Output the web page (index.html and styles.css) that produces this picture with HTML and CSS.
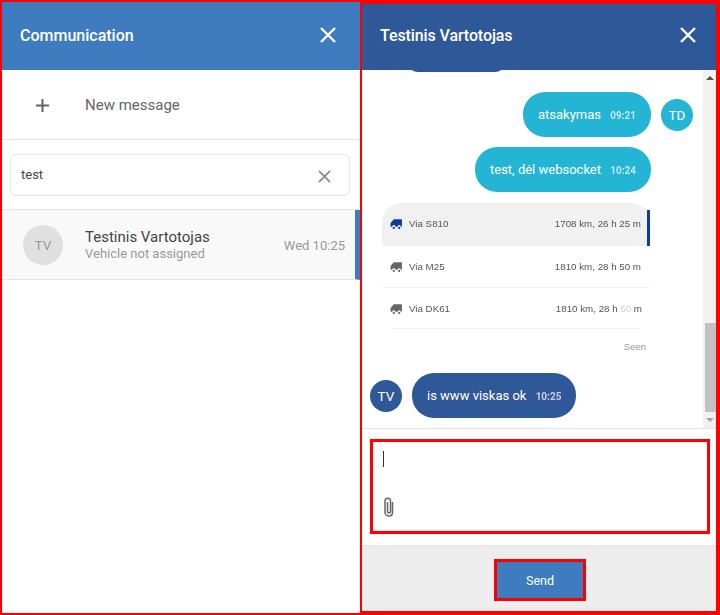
FILE: index.html
```html
<!DOCTYPE html>
<html lang="en">
<head>
    <meta charset="UTF-8">
    <meta name="viewport" content="width=device-width, initial-scale=1.0">
    <title>Communication</title>
    <link rel="stylesheet" href="styles.css">
</head>
<body>
    <div class="page">
        <section class="panel panel-list">
            <header class="panel-header header-light">
                <span class="panel-title">Communication</span>
                <svg class="close-icon" viewBox="0 0 16 16"><path d="M1 1 15 15M15 1 1 15"/></svg>
            </header>
            <div class="new-message">
                <svg class="plus-icon" viewBox="0 0 16 16"><path d="M8 1V15M1 8H15"/></svg>
                <span>New message</span>
            </div>
            <div class="search-section">
                <div class="search-box">
                    <span>test</span>
                    <svg class="clear-icon" viewBox="0 0 14 14"><path d="M1 1 13 13M13 1 1 13"/></svg>
                </div>
            </div>
            <div class="contact">
                <div class="avatar avatar-grey">TV</div>
                <div class="contact-info">
                    <div class="contact-name">Testinis Vartotojas</div>
                    <div class="contact-sub">Vehicle not assigned</div>
                </div>
                <div class="contact-time">Wed 10:25</div>
            </div>
        </section>

        <section class="panel panel-chat">
            <header class="panel-header header-dark">
                <span class="panel-title">Testinis Vartotojas</span>
                <svg class="close-icon" viewBox="0 0 16 16"><path d="M1 1 15 15M15 1 1 15"/></svg>
            </header>
            <div class="chat-area">
                <div class="messages">
                    <div class="old-bubble"></div>
                    <div class="msg msg-out">
                        <div class="bubble bubble-out">atsakymas <span class="msg-time">09:21</span></div>
                        <div class="avatar avatar-teal">TD</div>
                    </div>
                    <div class="msg msg-out msg-noavatar">
                        <div class="bubble bubble-out">test, dėl websocket <span class="msg-time">10:24</span></div>
                    </div>
                    <div class="route-card">
                        <div class="route route-active">
                            <svg class="truck" viewBox="0 0 12 10"><path d="M3.5 1H11V8H10A1.5 1.5 0 0 0 7 8H5A1.5 1.5 0 0 0 2 8H.5V4.5ZM3.5 8a1 1 0 1 0 .01 0ZM8.5 8a1 1 0 1 0 .01 0Z"/></svg>
                            <span class="route-name">Via S810</span>
                            <span class="route-info">1708 km, 26 h 25 m</span>
                        </div>
                        <div class="route route-border">
                            <svg class="truck" viewBox="0 0 12 10"><path d="M3.5 1H11V8H10A1.5 1.5 0 0 0 7 8H5A1.5 1.5 0 0 0 2 8H.5V4.5ZM3.5 8a1 1 0 1 0 .01 0ZM8.5 8a1 1 0 1 0 .01 0Z"/></svg>
                            <span class="route-name">Via M25</span>
                            <span class="route-info">1810 km, 28 h 50 m</span>
                        </div>
                        <div class="route route-last">
                            <svg class="truck" viewBox="0 0 12 10"><path d="M3.5 1H11V8H10A1.5 1.5 0 0 0 7 8H5A1.5 1.5 0 0 0 2 8H.5V4.5ZM3.5 8a1 1 0 1 0 .01 0ZM8.5 8a1 1 0 1 0 .01 0Z"/></svg>
                            <span class="route-name">Via DK61</span>
                            <span class="route-info">1810 km, 28 h 50 m</span>
                            <span class="smudge"></span>
                        </div>
                    </div>
                    <div class="seen">Seen</div>
                    <div class="msg msg-in">
                        <div class="avatar avatar-blue">TV</div>
                        <div class="bubble bubble-in">is www viskas ok <span class="msg-time">10:25</span></div>
                    </div>
                </div>
                <div class="scrollbar">
                    <span class="arrow-up"></span>
                    <div class="scroll-track"><div class="scroll-thumb"></div></div>
                    <span class="arrow-down"></span>
                </div>
            </div>
            <div class="composer">
                <div class="composer-box">
                    <span class="caret"></span>
                    <svg class="clip-icon" viewBox="0 0 12 20"><path d="M9.500 5V15.500C9.500 17.500 8 19 6 19S2 17.500 2 15.500V4C2 2.500 3 1.200 4.800 1.200S7.500 2.500 7.500 4V14.500C7.500 15.500 6.800 16 6 16S4.500 15.500 4.500 14.500V5"/></svg>
                </div>
            </div>
            <div class="send-bar">
                <button class="send-btn">Send</button>
            </div>
        </section>
    </div>
</body>
</html>
```

FILE: styles.css
```css
* {
    box-sizing: border-box;
}
html, body {
    margin: 0;
    height: 100%;
    overflow: hidden;
}
body {
    font-family: Roboto, sans-serif;
    background: white;
}
.page {
    display: flex;
    width: 720px;
    height: 615px;
}
.panel {
    display: flex;
    flex-direction: column;
    border: 2px solid #f00;
}
.panel-list {
    width: 361px;
    border-right-width: 1px;
}
.panel-chat {
    width: 359px;
    border-width: 4px 4px 4px 1px;
}
.panel-header {
    display: flex;
    align-items: center;
    justify-content: space-between;
    flex: none;
    color: white;
}
.header-light {
    height: 68px;
    padding: 0 24px 2px 18px;
    background: #3e7cbf;
}
.header-dark {
    height: 66px;
    padding: 0 20px 4px 18px;
    background: #2f5899;
}
.panel-title {
    font-size: 16px;
    font-weight: 500;
}
.header-dark .panel-title {
    letter-spacing: -0.1px;
}
.close-icon {
    width: 16px;
    height: 16px;
    fill: none;
    stroke: white;
    stroke-width: 2.4;
}
.new-message {
    display: flex;
    align-items: center;
    height: 70px;
    padding: 1px 0 0 33px;
    font-size: 15px;
    color: #666;
    border-bottom: 1px solid #e5e5e5;
}
.plus-icon {
    width: 15px;
    height: 15px;
    margin-right: 35px;
    fill: none;
    stroke: #666;
    stroke-width: 2.2;
}
.search-section {
    height: 70px;
    padding: 14px 10px 0 8px;
    border-bottom: 1px solid #e5e5e5;
}
.search-box {
    display: flex;
    align-items: center;
    justify-content: space-between;
    height: 42px;
    padding: 0 18px 2px 10px;
    font-size: 13px;
    color: #444;
    border: 1px solid #e5e5e5;
    border-radius: 6px;
}
.clear-icon {
    width: 13px;
    height: 13px;
    margin-top: 5px;
    fill: none;
    stroke: #888;
    stroke-width: 1.7;
}
.contact {
    display: flex;
    align-items: center;
    height: 70px;
    padding: 0 10px 0 21px;
    background: #f9f9f9;
    border-right: 5px solid #3e7cbf;
    border-bottom: 1px solid #e5e5e5;
}
.avatar {
    display: flex;
    align-items: center;
    justify-content: center;
    flex: none;
    border-radius: 50%;
}
.avatar-grey {
    width: 40px;
    height: 40px;
    font-size: 13.500px;
    color: #999;
    background: #e0e0e0;
}
.avatar-teal, .avatar-blue {
    width: 32px;
    height: 32px;
    font-size: 13.500px;
    color: white;
}
.avatar-teal {
    background: #23b5d3;
}
.avatar-blue {
    background: #2f5899;
}
.contact-info {
    flex: 1;
    margin-left: 22px;
    padding-top: 2px;
}
.contact-name {
    font-size: 15px;
    line-height: 17px;
    color: #444;
}
.contact-sub {
    font-size: 13px;
    line-height: 16px;
    color: #999;
}
.contact-time {
    padding-top: 2px;
    font-size: 13px;
    color: #999;
}
.chat-area {
    display: flex;
    flex: none;
    height: 358px;
    overflow: hidden;
}
.messages {
    flex: 1;
    padding: 0 10px 0 8px;
}
.old-bubble {
    width: 99px;
    height: 22px;
    margin: -20px 0 0 37px;
    background: #2f5899;
    border-radius: 22px;
}
.msg {
    display: flex;
    align-items: center;
    gap: 10px;
}
.msg-out {
    justify-content: flex-end;
    margin-top: 20px;
}
.msg-noavatar {
    margin-top: 10px;
    padding-right: 42px;
}
.msg-in {
    margin-top: 21px;
}
.bubble {
    height: 45px;
    padding: 0 15px;
    font-size: 13px;
    line-height: 45px;
    color: white;
    border-radius: 22px;
}
.bubble-out {
    background: #23b5d3;
}
.bubble-in {
    background: #2f5899;
}
.msg-time {
    margin-left: 6px;
    font-size: 10px;
    font-weight: 700;
    opacity: 0.7;
}
.route-card {
    position: relative;
    width: 268px;
    margin: 11px 0 0 12px;
    font-family: "Liberation Sans", sans-serif;
    font-size: 9.75px;
    color: #555;
    filter: blur(0.3px);
}
.route {
    display: flex;
    align-items: center;
    padding: 0 9px 0 8px;
}
.route-active {
    position: relative;
    height: 43px;
    padding-bottom: 2px;
    background: #f1f1f1;
    border-radius: 20px 20px 0 0;
}
.route-active::after {
    content: "";
    position: absolute;
    right: 0;
    bottom: 0;
    width: 3px;
    height: 36px;
    background: #0d3ca0;
}
.route-active .truck {
    fill: #0d3ca0;
}
.route-border {
    height: 42px;
    border-bottom: 1px solid #f0f0f0;
}
.route-last {
    position: relative;
    height: 41px;
    margin: 0 11px;
    padding: 0;
    border-bottom: 1px solid #f0f0f0;
}
.route-last .truck {
    margin-left: -3px;
}
.route-last .route-info {
    margin-right: -3px;
}
.truck {
    width: 13px;
    height: 11px;
    margin-right: 6px;
    fill: #666;
}
.route-name {
    flex: 1;
}
.smudge {
    position: absolute;
    left: 227px;
    top: 14px;
    width: 12px;
    height: 10px;
    background: rgba(255, 255, 255, 0.7);
}
.seen {
    margin-top: 12px;
    width: 276px;
    text-align: right;
    font-family: "Liberation Sans", sans-serif;
    font-size: 9.5px;
    color: #999;
}
.scrollbar {
    display: flex;
    flex-direction: column;
    align-items: center;
    flex: none;
    width: 13px;
    background: #f1f1f1;
}
.arrow-up, .arrow-down {
    flex: none;
    width: 0;
    height: 0;
    margin: 6px 0;
    border-left: 4px solid transparent;
    border-right: 4px solid transparent;
}
.arrow-up {
    border-bottom: 4px solid #505050;
}
.arrow-down {
    border-top: 4px solid #a3a3a3;
}
.scroll-track {
    flex: 1;
    width: 100%;
    padding: 237px 0 0 2px;
}
.scroll-thumb {
    height: 89px;
    background: #c1c1c1;
}
.composer {
    flex: none;
    height: 117px;
    padding: 10px 6px 0 8px;
    border-top: 1px solid #e5e5e5;
}
.composer-box {
    display: flex;
    flex-direction: column;
    justify-content: space-between;
    height: 95px;
    padding: 9px 12px 14px 10px;
    border: 3px solid #f00;
    box-shadow: inset 0 -1px 0 #e8e8e8;
}
.caret {
    display: block;
    width: 1px;
    height: 16px;
    background: #333;
}
.clip-icon {
    width: 12px;
    height: 20px;
    fill: none;
    stroke: #666;
    stroke-width: 1.5;
}
.send-bar {
    display: flex;
    flex: 1;
    justify-content: center;
    padding: 13px 0 0 2px;
    background: #ededed;
    border-top: 1px solid #e5e5e5;
}
.send-btn {
    width: 92px;
    height: 42px;
    font-family: Roboto, sans-serif;
    font-size: 12.500px;
    color: white;
    background: #3e7cbf;
    border: 3px solid #f00;
}
```
